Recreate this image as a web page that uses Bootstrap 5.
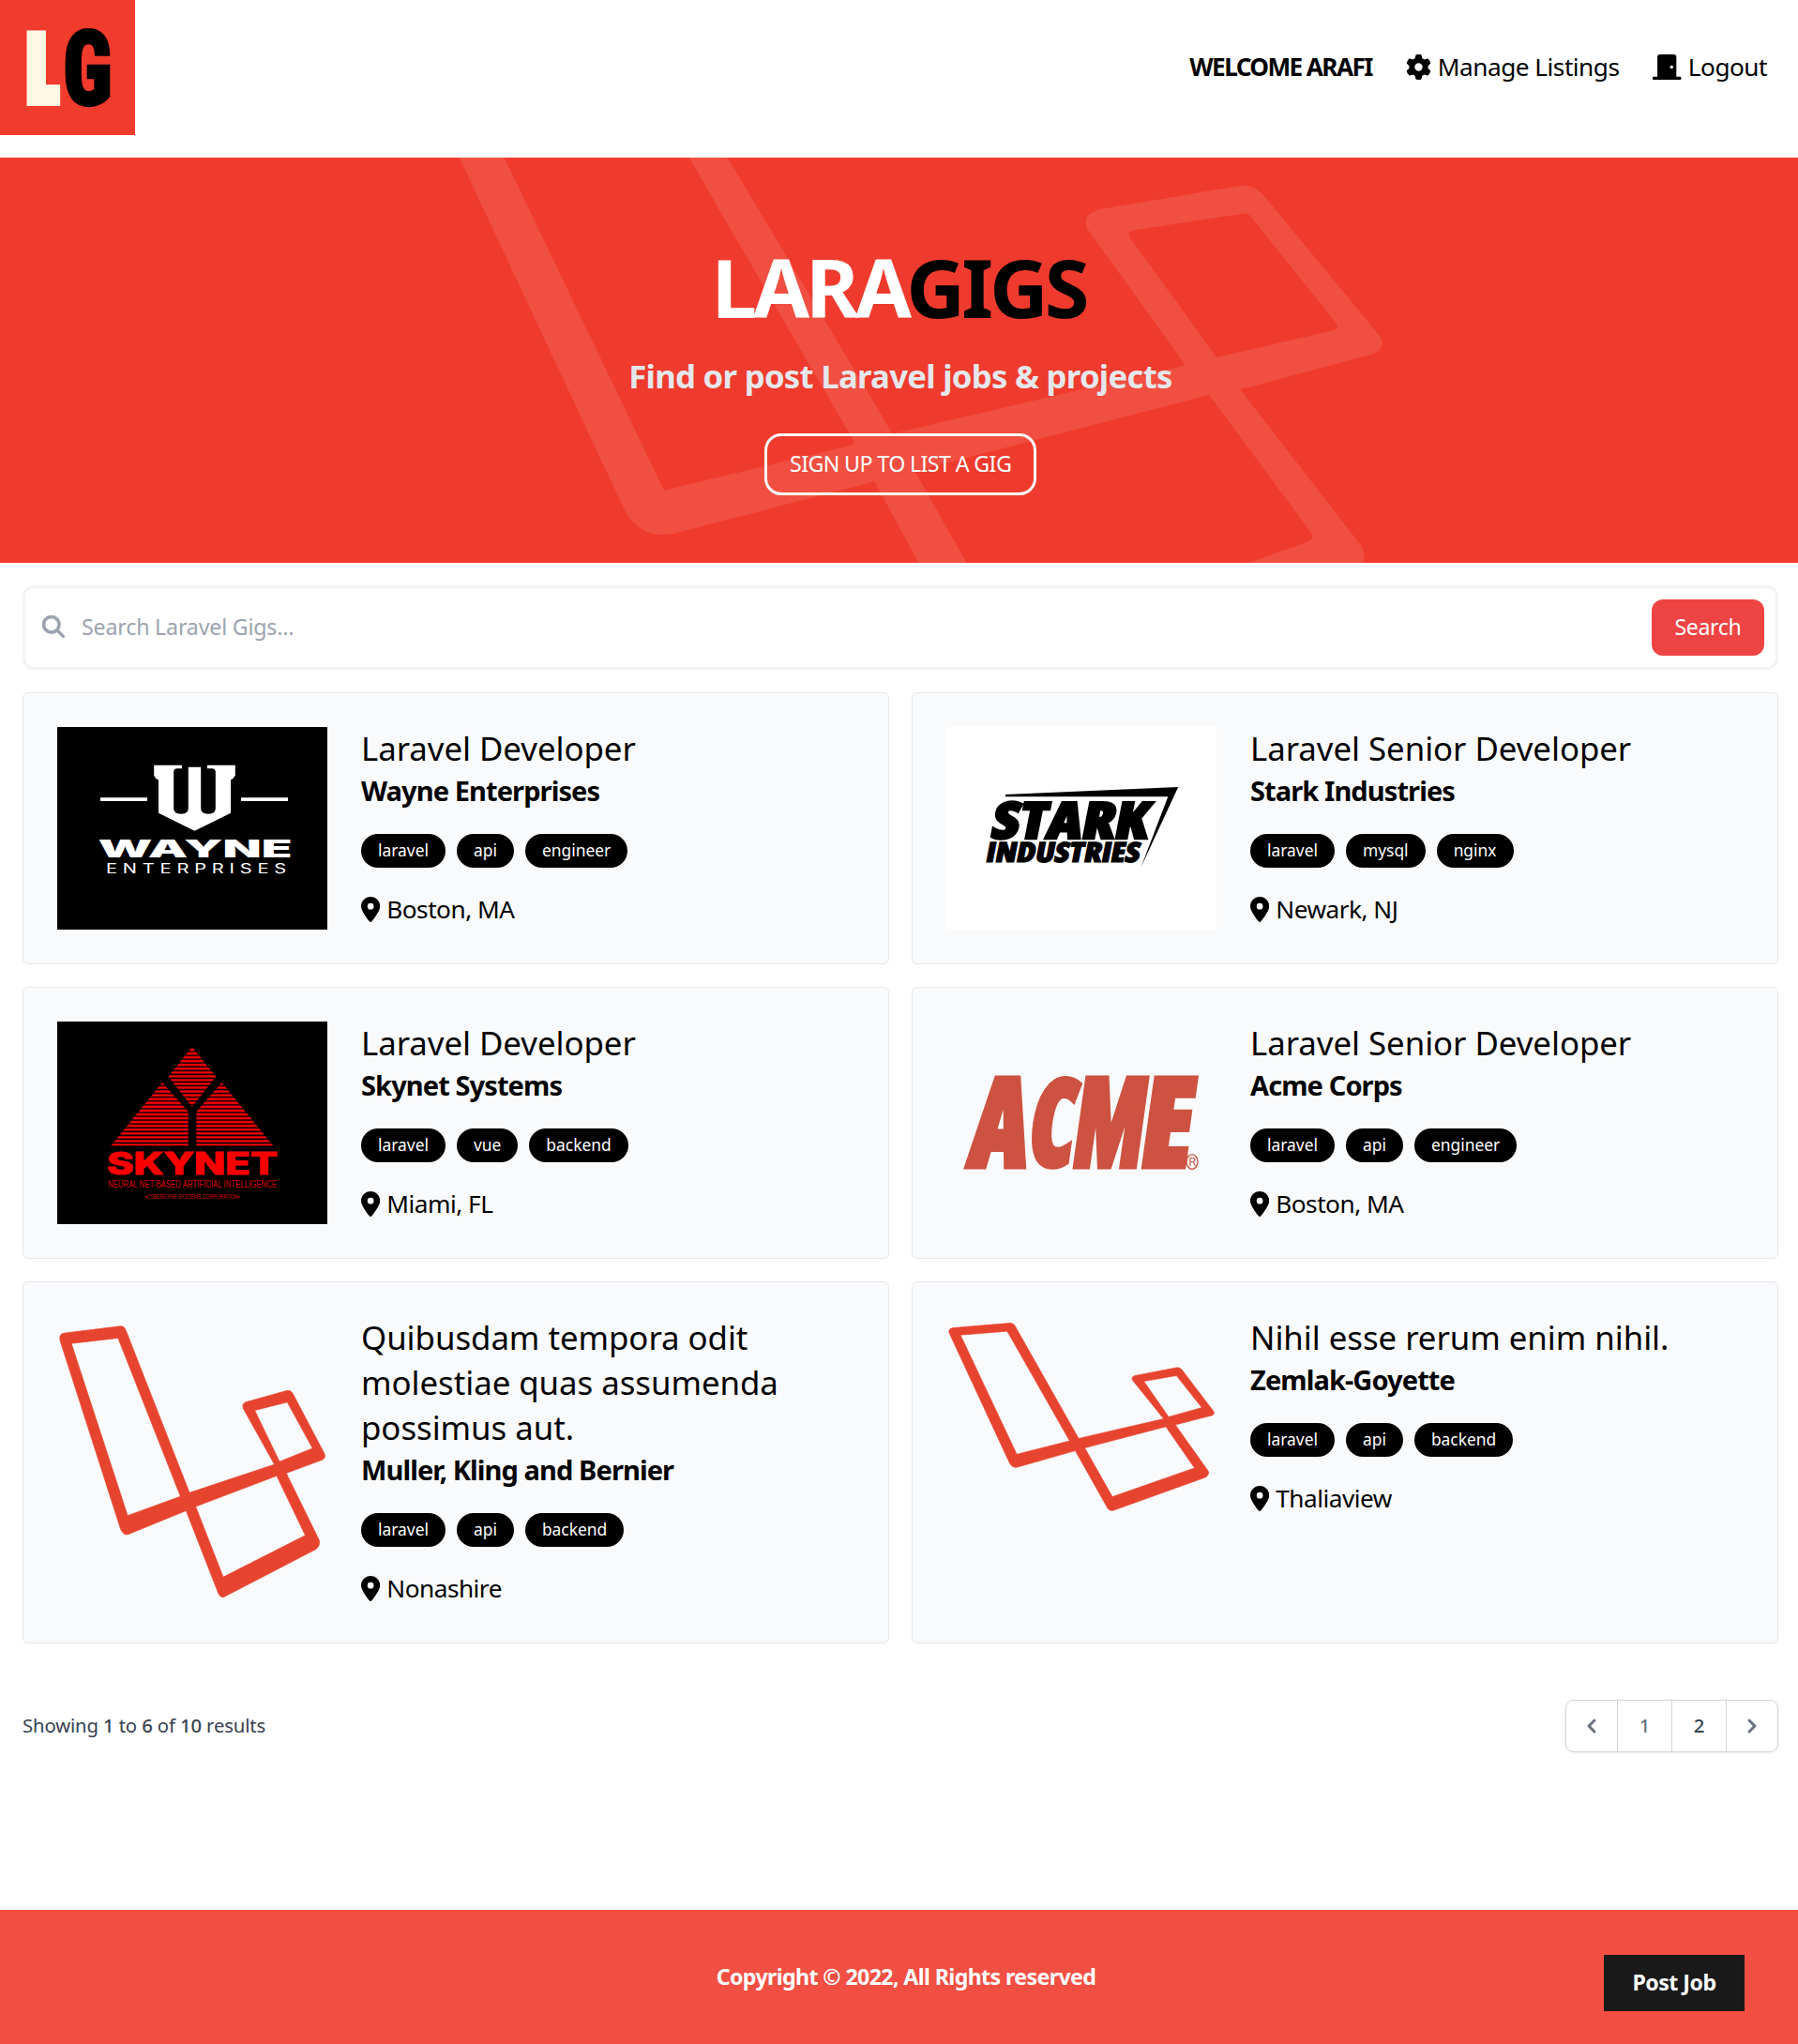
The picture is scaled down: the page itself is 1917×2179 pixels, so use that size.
<!DOCTYPE html>
<html lang="en">
<head>
<meta charset="utf-8">
<meta name="viewport" content="width=device-width, initial-scale=1">
<title>LaraGigs | Find Laravel Jobs &amp; Projects</title>
<link href="https://cdn.jsdelivr.net/npm/bootstrap@5.3.0/dist/css/bootstrap.min.css" rel="stylesheet">
<style>
  /* 24px root: every rem-based spacing utility is one and a half times larger */
  html { font-size: 24px; }
  body { font-family: "Noto Sans", "Open Sans", sans-serif; color: #000; background: #fff; overflow: hidden; line-height: 1.5; }
  a { color: inherit; text-decoration: none; }
  .page { width: 80rem; min-height: 100vh; }
  .t-lg { font-size: 26.2px; line-height: 42px; letter-spacing: -.019em; }
  .t-base { font-size: 23.2px; line-height: 36px; }
  .t-nav > * { gap: 7px; }
  .t-nav span { margin-top: -2px; }
  .brand-logo { width: 144px; height: 144px; display: block; }
  .main-nav { gap: 36px; padding-right: 36px; }
  .welcome { letter-spacing: -.061em; text-transform: uppercase; }
  .ico { display: block; height: 27px; width: auto; fill: currentColor; flex: none; margin-top: -2px; }

  .hero { height: 432px; background: #ef3b2d; padding-top: 96px; position: relative; }
  .hero-art { position: absolute; inset: 0; width: 1920px; height: 432px; fill: #fff; fill-opacity: .1; }
  .hero-inner { position: relative; }
  .hero h1 { font-size: 86.8px; line-height: 90px; letter-spacing: -.046em; font-weight: 700; margin: -4px 4px 28px 0; color: #fff; }
  .hero h1 span { color: #000; }
  .hero p { font-size: 34.7px; line-height: 48px; letter-spacing: -.0205em; font-weight: 700; color: #e5e7eb; margin: -1px 0 37px; }
  .signup { border: 3px solid #fff; border-radius: 18px; padding: 11px 24px 13px; width: 290px; letter-spacing: -.026em; color: #fff; white-space: nowrap; }

  .search-box { border: 3px solid #f3f4f6; border-radius: 12px; height: 90px; padding: 0 12px 0 18px; gap: 18px; }
  .search-box .ico { height: 24px; color: #9ca3af; stroke: currentColor; stroke-width: 14; }
  .search-box input { border: 0; outline: 0; background: none; letter-spacing: -.008em; padding: 0 0 3px; }
  .search-box input::placeholder { color: #9ca3af; opacity: 1; }
  .search-btn { background: #ef4444; color: #fff; border: 0; border-radius: 12px; width: 120px; height: 60px; letter-spacing: -.016em; padding-bottom: 3px; }

  .gigs { display: grid; grid-template-columns: 1fr 1fr; gap: 24px; }
  .gig { background: #f9fafb; border: 1px solid #e5e7eb; border-radius: 6px; padding: 36px; }
  .gig-art { width: 288px; min-height: 216px; margin-right: 36px; flex: none; }
  .gig-art svg { display: block; width: 100%; height: 100%; }
  .gig h3 { font-size: 34.8px; line-height: 48px; font-weight: 400; margin: -1px 0 1px; letter-spacing: -.001em; }
  .gig-firm { font-size: 29px; line-height: 42px; font-weight: 700; letter-spacing: -.031em; margin: -1px 0 25px; }
  .tag-pill { background: #000; color: #fff; font-size: 17.4px; line-height: 24px; padding: 5px 18px 7px; border-radius: 18px; }
  .gig-tags { gap: 12px; }
  .gig-place { gap: 7px; margin-top: 24px; height: 42px; }
  .gig-place span { margin-top: -2px; }

  .pager-row { font-size: 20.3px; line-height: 30px; color: #374151; padding: 24px 0; margin-top: 36px; letter-spacing: -.006em; }
  .pager-row > div { margin-top: -2px; }
  .pager { border: 1px solid #d1d5db; border-radius: 9px; box-shadow: 0 1px 3px rgba(0,0,0,.08); color: #6b7280; font-weight: 500; height: 56px; }
  .pager > * + * { border-left: 1px solid #d1d5db; }
  .pager svg { width: 30px; height: 30px; fill: currentColor; margin: 12px; display: block; }
  .pager a, .pager span { padding: 11px 0; width: 58px; text-align: center; }
  .pager .arrow { padding: 0; width: auto; }
  .pager .next-num { color: #374151; }

  .foot { height: 143px; background: #f14f42; color: #fff; font-weight: 700; position: relative; }
  .foot p { margin: 0 0 1px 12px; letter-spacing: -.027em; }
  .post-btn { position: absolute; right: 60px; top: 48px; width: 150px; height: 60px; line-height: 58px; background: #191919; text-align: center; letter-spacing: -.024em; }
</style>
<script src="https://cdn.jsdelivr.net/npm/bootstrap@5.3.0/dist/js/bootstrap.bundle.min.js"></script>
</head>
<body>
<svg width="0" height="0" class="position-absolute">
  <defs>
    <symbol id="pin" viewBox="0 0 384 512"><path d="M215.7 499.2C267 435 384 279.4 384 192C384 86 298 0 192 0S0 86 0 192c0 87.4 117 243 168.3 307.2c12.3 15.3 35.1 15.3 47.4 0zM192 128a64 64 0 1 1 0 128a64 64 0 1 1 0-128z"/></symbol>
    <symbol id="laravel" viewBox="0 0 288 216" preserveAspectRatio="none">
      <path fill="#e74430" stroke="#e74430" stroke-width=".6" fill-rule="evenodd" d="M7 12.6L67 7.5Q71.5 7 73.5 11L141 130.4L231.6 109.5L199 69Q196 65 201 63.5L245 55Q248.500 54.300 251 57L284.500 101Q287 104.500 283 106L244.200 115.900L279 165Q281 169 276 172L180 206.500Q175 209 172 205L137.400 143.600L76 161Q71 162.500 67.500 157L3.500 19Q1 13.500 7 12.600ZM15.100 20.200L75.100 147.300L131.400 133.100L64.900 16.200ZM210.600 69.600L237 107.400L272.300 97.600L245.300 63.500ZM147.600 140.600L177 192.600L264.500 161.900L234 117.900Z"/>
    </symbol>
    <pattern id="scan" width="8" height="4.06" patternUnits="userSpaceOnUse"><rect width="8" height="2.500" y=".3" fill="#fb0000"/></pattern>
  </defs>
</svg>

<div class="page d-flex flex-column">
  <nav class="d-flex justify-content-between align-items-center mb-3">
    <a href="#" aria-label="LaraGigs home">
      <svg class="brand-logo" viewBox="0 0 144 144">
        <rect width="144" height="144" fill="#f03b2d"/>
        <g font-family="Open Sans" font-weight="800" style="font-stretch:75%">
          <text x="27" y="109" font-size="101" stroke-width="8" fill="#fff8e5" stroke="#fff8e5" textLength="35" lengthAdjust="spacingAndGlyphs">L</text>
          <text x="67" y="112" font-family="Roboto" font-weight="900" font-size="111" stroke-width="2.500" fill="#000" stroke="#000" textLength="53" lengthAdjust="spacingAndGlyphs">G</text>
        </g>
      </svg>
    </a>
    <div class="main-nav t-nav d-flex t-lg">
      <span class="fw-bold welcome">Welcome Arafi</span>
      <a href="#" class="d-flex align-items-center"><svg class="ico" viewBox="0 0 512 512"><path d="M495.900 166.600c3.200 8.700 .5 18.400-6.400 24.600l-43.300 39.400c1.100 8.300 1.700 16.800 1.700 25.400s-.6 17.100-1.700 25.400l43.300 39.400c6.900 6.200 9.600 15.900 6.400 24.600c-4.400 11.900-9.700 23.300-15.800 34.300l-4.700 8.100c-6.600 11-14 21.400-22.100 31.200c-5.900 7.200-15.700 9.600-24.500 6.800l-55.700-17.700c-13.400 10.300-28.200 18.900-44 25.400l-12.500 57.100c-2 9.100-9 16.300-18.200 17.800c-13.800 2.300-28 3.500-42.500 3.500s-28.700-1.200-42.500-3.500c-9.200-1.500-16.200-8.700-18.200-17.800l-12.500-57.100c-15.800-6.500-30.600-15.100-44-25.400L83.100 425.900c-8.800 2.800-18.600 .3-24.500-6.800c-8.100-9.800-15.500-20.200-22.100-31.200l-4.700-8.100c-6.100-11-11.400-22.400-15.800-34.300c-3.200-8.700-.5-18.400 6.400-24.600l43.300-39.400C64.600 273.100 64 264.600 64 256s.6-17.100 1.700-25.400L22.400 191.200c-6.900-6.200-9.600-15.900-6.400-24.600c4.400-11.900 9.700-23.300 15.800-34.300l4.700-8.100c6.600-11 14-21.400 22.100-31.200c5.900-7.200 15.700-9.600 24.500-6.800l55.700 17.700c13.400-10.300 28.200-18.900 44-25.400l12.500-57.100c2-9.100 9-16.300 18.200-17.800C227.300 1.200 241.500 0 256 0s28.700 1.200 42.500 3.500c9.200 1.500 16.200 8.700 18.200 17.800l12.500 57.100c15.800 6.500 30.600 15.100 44 25.400l55.700-17.700c8.800-2.800 18.600-.3 24.500 6.800c8.100 9.800 15.500 20.200 22.100 31.200l4.700 8.100c6.100 11 11.400 22.400 15.800 34.300zM256 336a80 80 0 1 0 0-160a80 80 0 1 0 0 160z"/></svg><span>Manage Listings</span></a>
      <a href="#" class="d-flex align-items-center"><svg class="ico" viewBox="0 0 576 512"><path d="M560 448H480V50.750C480 22.750 458.500 0 432 0h-288C117.500 0 96 22.750 96 50.750V448H16C7.125 448 0 455.100 0 464v32C0 503.100 7.125 512 16 512h544c8.875 0 16-7.125 16-16v-32C576 455.100 568.900 448 560 448zM384 288c-17.620 0-32-14.380-32-32s14.380-32 32-32s32 14.380 32 32S401.600 288 384 288z"/></svg><span>Logout</span></a>
    </div>
  </nav>

  <section class="hero text-center">
    <svg class="hero-art" viewBox="0 0 1920 432" aria-hidden="true">
      <path fill-rule="evenodd" d="M489.800 0H775.700L951.500 294.300L1263.900 221.300L1160 77Q1151 61 1173 55L1322 30Q1338 28 1348.800 42L1471 190Q1480 203 1462 210L1322.300 247.300L1450 412Q1456 420 1454 432H979.400L932.300 345.300L722 400Q686 409 667 378ZM537.600 0L708 354.700L909 306.300Q911 305 909 300L734.600 0ZM1204 79Q1202 82 1206 87L1297.100 213L1422 184Q1427 182 1425 177L1333 62Q1330 59 1327 59.500L1208 77.500ZM975.400 334.300L1030.400 432H1330.900L1396 409Q1401 406 1398 400L1289.100 253Z"/>
    </svg>
    <div class="hero-inner">
      <h1>LARA<span>GIGS</span></h1>
      <p>Find or post Laravel jobs &amp; projects</p>
      <a href="#" class="signup d-inline-block t-base">SIGN UP TO LIST A GIG</a>
    </div>
  </section>

  <main class="px-3">
    <form class="search-box my-3 d-flex align-items-center">
      <svg class="ico" viewBox="0 0 512 512"><path d="M416 208c0 45.900-14.900 88.300-40 122.700L502.600 457.400c12.500 12.500 12.500 32.800 0 45.300s-32.800 12.500-45.300 0L330.700 376c-34.400 25.200-76.800 40-122.700 40C93.100 416 0 322.900 0 208S93.100 0 208 0S416 93.100 416 208zM208 352a144 144 0 1 0 0-288a144 144 0 1 0 0 288z"/></svg>
      <input type="text" class="flex-grow-1 t-base" placeholder="Search Laravel Gigs...">
      <button type="button" class="search-btn t-base">Search</button>
    </form>

    <div class="gigs">
      <article class="gig d-flex">
        <div class="gig-art">
          <svg viewBox="0 0 288 216">
            <rect width="288" height="216"/>
            <g fill="#fff">
              <path fill-rule="evenodd" d="M103.200 40.700H133V44.300H128Q124.200 44.300 124.200 48V87Q124.200 92.700 132 92.700T139.800 87V42.700H153.200V87Q153.200 92.700 161 92.700T168.800 87V48Q168.800 44.300 165 44.300H159.900V40.700H189.800V51.700Q188 55 185 56.500V91.700L146.500 110.700L108 91.700V56.500Q104.500 55 103.200 51.700Z"/>
              <path d="M46 75.300h50v3.700H46zM196 75.300h50v3.700h-50z"/>
              <text x="43.500" y="139" font-family="Inter" font-weight="900" font-size="25.700" textLength="207" lengthAdjust="spacingAndGlyphs">WAYNE</text>
              <text x="52" y="156" font-family="Inter" font-size="13.800" letter-spacing="4" textLength="198" lengthAdjust="spacingAndGlyphs">ENTERPRISES</text>
            </g>
          </svg>
        </div>
        <div>
          <h3>Laravel Developer</h3>
          <div class="gig-firm">Wayne Enterprises</div>
          <div class="gig-tags d-flex"><a class="tag-pill">laravel</a><a class="tag-pill">api</a><a class="tag-pill">engineer</a></div>
          <div class="gig-place d-flex align-items-center t-lg"><svg class="ico" viewBox="0 0 384 512"><use href="#pin"/></svg><span>Boston, MA</span></div>
        </div>
      </article>

      <article class="gig d-flex">
        <div class="gig-art">
          <svg viewBox="0 0 288 216">
            <rect width="288" height="216" fill="#fff"/>
            <path d="M63 72L247.200 64L207.600 149.300L236.300 74.300H63Z"/>
            <g font-family="Open Sans" font-weight="800" stroke="#000" style="font-stretch:75%">
              <text transform="translate(46 119) skewX(-11)" font-size="54.500" stroke-width="2.400" textLength="167" lengthAdjust="spacingAndGlyphs">STARK</text>
              <text transform="translate(41 143.500) skewX(-11)" font-size="29.500" stroke-width="1.200" textLength="164" lengthAdjust="spacingAndGlyphs">INDUSTRIES</text>
            </g>
          </svg>
        </div>
        <div>
          <h3>Laravel Senior Developer</h3>
          <div class="gig-firm">Stark Industries</div>
          <div class="gig-tags d-flex"><a class="tag-pill">laravel</a><a class="tag-pill">mysql</a><a class="tag-pill">nginx</a></div>
          <div class="gig-place d-flex align-items-center t-lg"><svg class="ico" viewBox="0 0 384 512"><use href="#pin"/></svg><span>Newark, NJ</span></div>
        </div>
      </article>

      <article class="gig d-flex">
        <div class="gig-art">
          <svg viewBox="0 0 288 216">
            <rect width="288" height="216"/>
            <path fill="url(#scan)" d="M143.800 27L169.300 58.700L143.800 91L118.400 58.700ZM112 65L139.800 96V132.500H57.200ZM175.500 65L230.400 132.500H148.300V96Z"/>
            <g fill="#fb0000">
              <text x="53" y="162.500" font-family="Inter" font-weight="800" font-size="32.500" stroke="#fb0000" stroke-width="1" textLength="182" lengthAdjust="spacingAndGlyphs">SKYNET</text>
              <text x="54" y="177" font-family="Liberation Sans" font-size="10" fill="#d80000" textLength="180" lengthAdjust="spacingAndGlyphs">NEURAL NET-BASED ARTIFICIAL INTELLIGENCE</text>
              <text x="93.400" y="188.500" font-family="Liberation Sans" font-size="6.500" fill="#d80000" textLength="101" lengthAdjust="spacingAndGlyphs">•CYBERDYNE SYSTEMS CORPORATION•</text>
            </g>
          </svg>
        </div>
        <div>
          <h3>Laravel Developer</h3>
          <div class="gig-firm">Skynet Systems</div>
          <div class="gig-tags d-flex"><a class="tag-pill">laravel</a><a class="tag-pill">vue</a><a class="tag-pill">backend</a></div>
          <div class="gig-place d-flex align-items-center t-lg"><svg class="ico" viewBox="0 0 384 512"><use href="#pin"/></svg><span>Miami, FL</span></div>
        </div>
      </article>

      <article class="gig d-flex">
        <div class="gig-art">
          <svg viewBox="0 0 288 216">
            <g font-family="Open Sans" font-weight="800" font-size="133" fill="#cd5241" stroke="#cd5241" stroke-width="5" style="font-stretch:75%">
              <text transform="translate(21 155.200) skewX(-8)" textLength="62" lengthAdjust="spacingAndGlyphs">A</text>
              <text transform="translate(84 153.700) skewX(-8)" font-size="129" textLength="49" lengthAdjust="spacingAndGlyphs">C</text>
              <text transform="translate(131 155.200) skewX(-8)" textLength="76" lengthAdjust="spacingAndGlyphs">M</text>
              <text transform="translate(203 155.200) skewX(-8)" textLength="55" lengthAdjust="spacingAndGlyphs">E</text>
            </g>
            <ellipse cx="262" cy="149.500" rx="6" ry="7.800" fill="none" stroke="#cd5241" stroke-width="1.300"/>
            <text x="258.500" y="154" font-family="Liberation Sans" font-size="12" fill="#cd5241" textLength="8" lengthAdjust="spacingAndGlyphs">R</text>
          </svg>
        </div>
        <div>
          <h3>Laravel Senior Developer</h3>
          <div class="gig-firm">Acme Corps</div>
          <div class="gig-tags d-flex"><a class="tag-pill">laravel</a><a class="tag-pill">api</a><a class="tag-pill">engineer</a></div>
          <div class="gig-place d-flex align-items-center t-lg"><svg class="ico" viewBox="0 0 384 512"><use href="#pin"/></svg><span>Boston, MA</span></div>
        </div>
      </article>

      <article class="gig d-flex">
        <div class="gig-art"><svg><use href="#laravel"/></svg></div>
        <div>
          <h3>Quibusdam tempora odit<br>molestiae quas assumenda<br>possimus aut.</h3>
          <div class="gig-firm">Muller, Kling and Bernier</div>
          <div class="gig-tags d-flex"><a class="tag-pill">laravel</a><a class="tag-pill">api</a><a class="tag-pill">backend</a></div>
          <div class="gig-place d-flex align-items-center t-lg"><svg class="ico" viewBox="0 0 384 512"><use href="#pin"/></svg><span>Nonashire</span></div>
        </div>
      </article>

      <article class="gig d-flex align-items-start">
        <div class="gig-art"><svg class="h-auto" viewBox="0 0 288 216"><use href="#laravel"/></svg></div>
        <div>
          <h3>Nihil esse rerum enim nihil.</h3>
          <div class="gig-firm">Zemlak-Goyette</div>
          <div class="gig-tags d-flex"><a class="tag-pill">laravel</a><a class="tag-pill">api</a><a class="tag-pill">backend</a></div>
          <div class="gig-place d-flex align-items-center t-lg"><svg class="ico" viewBox="0 0 384 512"><use href="#pin"/></svg><span>Thaliaview</span></div>
        </div>
      </article>
    </div>

    <div class="pager-row d-flex justify-content-between align-items-center">
      <div>Showing <span class="fw-medium">1</span> to <span class="fw-medium">6</span> of <span class="fw-medium">10</span> results</div>
      <nav class="pager d-flex">
        <span class="arrow"><svg viewBox="0 0 20 20"><path d="M12.707 5.293a1 1 0 010 1.414L9.414 10l3.293 3.293a1 1 0 01-1.414 1.414l-4-4a1 1 0 010-1.414l4-4a1 1 0 011.414 0z"/></svg></span>
        <span>1</span>
        <a href="#" class="next-num">2</a>
        <a href="#" class="arrow"><svg viewBox="0 0 20 20"><path d="M7.293 14.707a1 1 0 010-1.414L10.586 10 7.293 6.707a1 1 0 011.414-1.414l4 4a1 1 0 010 1.414l-4 4a1 1 0 01-1.414 0z"/></svg></a>
      </nav>
    </div>
  </main>

  <footer class="foot mt-auto d-flex align-items-center justify-content-center t-base">
    <p>Copyright © 2022, All Rights reserved</p>
    <a href="#" class="post-btn">Post Job</a>
  </footer>
</div>
</body>
</html>
